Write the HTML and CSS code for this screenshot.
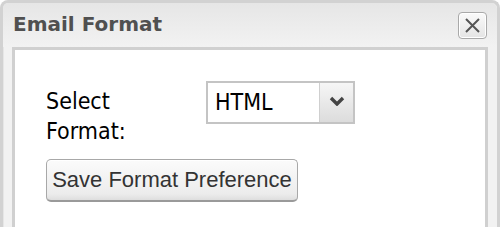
FILE: index.html
```html
<!DOCTYPE html>
<html>
<head>
<meta charset="utf-8">
<link rel="stylesheet" href="styles.css">
</head>
<body>
<div class="dialog">
  <div class="titlebar">
    <span class="title">Email Format</span>
    <button class="close" aria-label="Close">
      <svg width="17" height="17" viewBox="0 0 17 17"><path d="M2 2 L15 15 M15 2 L2 15" stroke="#555" stroke-width="2" fill="none"/></svg>
    </button>
  </div>
  <div class="content">
    <div class="row">
      <label class="label">Select<br>Format:</label>
      <div class="select">
        <span class="value">HTML</span>
        <span class="arrow">
          <svg width="16" height="10" viewBox="0 0 16 10"><path d="M2 2 L8 8 L14 2" stroke="#444" stroke-width="3.4" fill="none"/></svg>
        </span>
      </div>
    </div>
    <button class="save">Save Format Preference</button>
  </div>
</div>
</body>
</html>
```
FILE: styles.css
```css
html, body {
  margin: 0;
  padding: 0;
  background: #ffffff;
  overflow: hidden;
}
.dialog {
  box-sizing: border-box;
  width: 500px;
  height: 227px;
  background: #f2f2f2;
  border: 3px solid #d2d2d2;
  border-bottom: none;
  border-radius: 8px 8px 0 0;
  padding: 0 9px;
  box-shadow: inset 1px 1px 0 #e6e6e6;
}
.titlebar {
  height: 44px;
  margin: 0 -9px;
  padding: 0 10px 0 10px;
  display: flex;
  align-items: center;
  justify-content: space-between;
  background: linear-gradient(#e6e6e6, #f2f2f2);
  border-radius: 6px 6px 0 0;
}
.title {
  font-family: "DejaVu Sans", Verdana, sans-serif;
  font-weight: bold;
  font-size: 20px;
  color: #505050;
  margin-top: -2px;
}
.close {
  box-sizing: border-box;
  width: 29px;
  height: 27px;
  margin-top: 1px;
  padding: 0;
  border: 1px solid #a9a9a9;
  border-radius: 4px;
  background: linear-gradient(#fafafa, #e4e4e4);
  box-shadow: inset 0 0 0 1px #ffffff;
  display: flex;
  align-items: center;
  justify-content: center;
}
.close svg { display: block; }
.content {
  box-sizing: border-box;
  height: 183px;
  background: #ffffff;
  border: 3px solid #d0d0d0;
  border-bottom: none;
  padding: 31px 0 0 31px;
}
.row {
  display: flex;
  align-items: flex-start;
}
.label {
  width: 160px;
  font-family: "DejaVu Sans", Tahoma, sans-serif;
  font-stretch: condensed;
  font-size: 23px;
  line-height: 30px;
  color: #000;
  margin-top: 5px;
}
.select {
  box-sizing: border-box;
  width: 149px;
  height: 43px;
  border: 2px solid #c4c4c4;
  display: flex;
  background: #fff;
}
.value {
  flex: 1;
  font-family: "DejaVu Sans", Tahoma, sans-serif;
  font-stretch: condensed;
  font-size: 23px;
  line-height: 39px;
  padding-left: 7px;
  color: #000;
}
.arrow {
  width: 33px;
  border-left: 1px solid #cfcfcf;
  background: linear-gradient(#f6f6f6, #dcdcdc);
  display: flex;
  align-items: center;
  justify-content: center;
}
.arrow svg { display: block; margin-top: -4px; }
.save {
  display: block;
  box-sizing: border-box;
  margin-top: 13px;
  height: 43px;
  width: 252px;
  padding: 0;
  font-family: "Liberation Sans", Arial, sans-serif;
  font-size: 22px;
  color: #333;
  border: 1px solid #a8a8a8;
  border-bottom: 2px solid #9a9a9a;
  border-radius: 5px;
  background: linear-gradient(#fbfbfb, #ececec 85%, #dedede);
  box-shadow: inset 0 1px 0 #ffffff;
}
```
